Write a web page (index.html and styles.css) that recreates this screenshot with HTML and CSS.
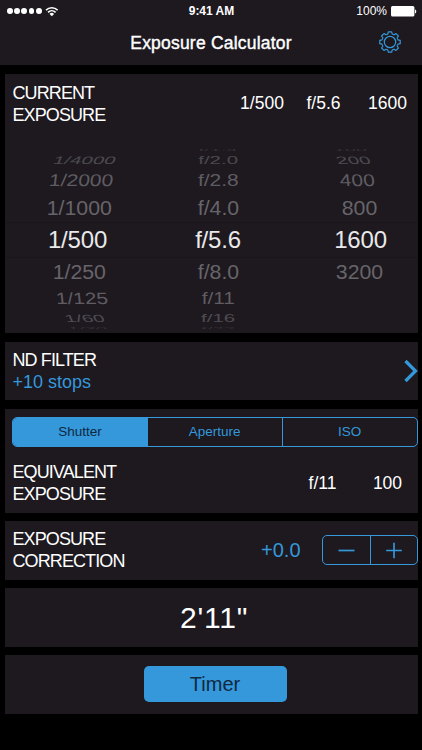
FILE: index.html
```html
<!DOCTYPE html>
<html lang="en">
<head>
    <meta charset="UTF-8">
    <meta name="viewport" content="width=device-width, initial-scale=1.0">
    <title>Exposure Calculator</title>
    <link rel="stylesheet" href="styles.css">
</head>
<body>
    <header class="header">
        <div class="status">
            <div class="signal">
                <i class="dot"></i><i class="dot"></i><i class="dot"></i><i class="dot"></i><i class="dot"></i>
                <svg class="wifi" width="14" height="11" viewBox="0 0 14 11">
                    <path d="M1 4.1a8.4 8.4 0 0 1 11.6 0M3 6.3a5.5 5.5 0 0 1 7.6 0" fill="none" stroke="#fff" stroke-width="1.6"/>
                    <path d="M6.8 10.3L4.5 7.9a3.3 3.3 0 0 1 4.6 0z" fill="#fff"/>
                </svg>
            </div>
            <div class="clock">9:41 AM</div>
            <div class="power">
                <span class="percent">100%</span>
                <svg width="26" height="11" viewBox="0 0 26 11">
                    <rect x="0" y="0" width="23.4" height="10.6" rx="1.5" fill="#fff"/>
                    <path d="M24 3.4c1.7.5 1.7 3.5 0 4z" fill="#fff"/>
                </svg>
            </div>
        </div>
        <div class="titlebar">
            <h1>Exposure Calculator</h1>
            <svg class="gear" width="24" height="24" viewBox="-12 -12 24 24">
                <defs>
                    <path id="tooth" d="M-3.14-7.58L-2.2-7.95L-1.7-10.2H1.7L2.2-7.95L3.14-7.58"/>
                </defs>
                <circle r="5.7"/>
                <use href="#tooth"/>
                <use href="#tooth" transform="rotate(45)"/>
                <use href="#tooth" transform="rotate(90)"/>
                <use href="#tooth" transform="rotate(135)"/>
                <use href="#tooth" transform="rotate(180)"/>
                <use href="#tooth" transform="rotate(225)"/>
                <use href="#tooth" transform="rotate(270)"/>
                <use href="#tooth" transform="rotate(315)"/>
            </svg>
        </div>
    </header>

    <main class="cards">
        <section class="card current">
            <div class="summary">
                <h2>CURRENT<br>EXPOSURE</h2>
                <div class="values">
                    <span class="shutter">1/500</span>
                    <span class="aperture">f/5.6</span>
                    <span class="iso">1600</span>
                </div>
            </div>
            <div class="picker">
                <div class="row up4"><span></span><span>f/1.4</span><span>100</span></div>
                <div class="row up3"><span>1/4000</span><span>f/2.0</span><span>200</span></div>
                <div class="row up2"><span>1/2000</span><span>f/2.8</span><span>400</span></div>
                <div class="row up1"><span>1/1000</span><span>f/4.0</span><span>800</span></div>
                <div class="row selected"><span>1/500</span><span>f/5.6</span><span>1600</span></div>
                <div class="row down1"><span>1/250</span><span>f/8.0</span><span>3200</span></div>
                <div class="row down2"><span>1/125</span><span>f/11</span><span></span></div>
                <div class="row down3"><span>1/60</span><span>f/16</span><span></span></div>
                <div class="row down4"><span>1/30</span><span>f/22</span><span></span></div>
            </div>
        </section>

        <section class="card filter">
            <div>
                <h2>ND FILTER</h2>
                <p class="stops">+10 stops</p>
            </div>
            <svg class="chevron" width="14" height="24" viewBox="0 0 14 24">
                <path d="M1.5 2L11.5 12L1.5 22" fill="none" stroke="#3498db" stroke-width="3.2"/>
            </svg>
        </section>

        <section class="card equivalent">
            <div class="segments">
                <div class="segment active">Shutter</div>
                <div class="segment">Aperture</div>
                <div class="segment">ISO</div>
            </div>
            <div class="summary">
                <h2>EQUIVALENT<br>EXPOSURE</h2>
                <div class="values">
                    <span class="aperture">f/11</span>
                    <span class="iso">100</span>
                </div>
            </div>
        </section>

        <section class="card correction">
            <h2>EXPOSURE<br>CORRECTION</h2>
            <div class="adjust">
                <span class="amount">+0.0</span>
                <div class="stepper">
                    <svg width="47" height="29" viewBox="0 0 47 29">
                        <path d="M15.5 14.5H31.5"/>
                    </svg>
                    <svg width="47" height="29" viewBox="0 0 47 29">
                        <path d="M15.5 14.5H31.5M23.5 6.5V22.5"/>
                    </svg>
                </div>
            </div>
        </section>

        <section class="card result">2'11"</section>

        <section class="card action">
            <button class="timer">Timer</button>
        </section>
    </main>
</body>
</html>
```
FILE: styles.css
```css
* {
    box-sizing: border-box;
    margin: 0;
    padding: 0;
}

body {
    width: 422px;
    height: 750px;
    overflow: hidden;
    background: #000;
    color: #fff;
    font-family: "Liberation Sans", Arial, sans-serif;
}

.header {
    height: 65px;
    background: #1d191f;
}

.status {
    display: grid;
    grid-template-columns: 1fr auto 1fr;
    align-items: center;
    height: 21px;
    padding: 1px 6px 0 7px;
    font-size: 12px;
}

.signal {
    display: flex;
    align-items: center;
    gap: 1.4px;
}

.dot {
    width: 5.8px;
    height: 5.8px;
    border-radius: 50%;
    background: #fff;
}

.wifi {
    margin-left: 2.5px;
}

.clock {
    font-weight: bold;
    font-size: 12px;
}

.power {
    display: flex;
    justify-content: flex-end;
    align-items: center;
    gap: 4px;
}

.power svg {
    margin-right: -1px;
}

.titlebar {
    display: grid;
    grid-template-columns: 1fr auto 1fr;
    align-items: center;
    height: 43px;
    padding-right: 20px;
    padding-left: 20px;
}

.titlebar h1 {
    grid-column: 2;
    padding-top: 2px;
    font-size: 17.5px;
    font-weight: normal;
    letter-spacing: 0.2px;
    -webkit-text-stroke: 0.4px #fff;
}

.gear {
    justify-self: end;
    margin-top: -1px;
    fill: none;
    stroke: #3498db;
    stroke-width: 1.2;
    stroke-linejoin: round;
}

.cards {
    display: flex;
    flex-direction: column;
    gap: 8.5px;
    padding: 9px 4.5px 0 4.5px;
}

.card {
    height: 58.5px;
    background: #1d191f;
}

.card h2 {
    font-size: 18px;
    font-weight: normal;
    letter-spacing: -0.9px;
    line-height: 22px;
}

.current {
    height: 259px;
}

.summary {
    display: flex;
    justify-content: space-between;
    align-items: center;
    height: 58px;
    padding-top: 1px;
    padding-left: 8px;
}

.values {
    display: flex;
    font-size: 17.5px;
    text-align: center;
}

.shutter {
    width: 60px;
    padding-left: 3px;
}

.aperture {
    width: 66px;
}

.iso {
    width: 62px;
    margin-right: -1px;
}

/* wheel picker */
.picker {
    height: 187px;
    margin-top: 14px;
    color: #67646a;
    font-size: 21.5px;
    clip-path: inset(3px 0 4px 0);
}

.row {
    display: grid;
    grid-template-columns: 145px 137px 1fr;
    align-items: center;
    justify-items: center;
    line-height: 0;
    white-space: nowrap;
}

.row span:first-child {
    margin-left: 1px;
}

.row span:last-child {
    margin-left: 17px;
}

.selected {
    height: 36px;
    border-top: 1px solid #19161b;
    border-bottom: 1px solid #19161b;
    color: #e9e8ea;
    font-size: 24px;
    letter-spacing: -0.2px;
}

.up1 {
    height: 28px;
    transform: scale(0.99, 0.95);
}

.up2 {
    height: 27px;
    color: #5f5c62;
    transform: scale(0.975, 0.79);
}

.up3 {
    height: 13px;
    color: #4c494f;
    transform: scale(0.95, 0.5);
}

.up4 {
    height: 8px;
    color: #353238;
    transform: scale(0.93, 0.2);
}

.down1 {
    height: 27px;
    transform: scale(0.99, 0.95);
}

.down2 {
    height: 28px;
    color: #5f5c62;
    transform: scale(0.97, 0.76);
}

.down3 {
    height: 11px;
    color: #4f4c52;
    transform: scale(0.95, 0.48);
}

.down4 {
    height: 9px;
    color: #353238;
    transform: scale(0.93, 0.2);
}

/* outer columns lean towards the middle of the wheel */
.up2 span:first-child {
    transform: skewX(-5deg);
}

.up3 span:first-child {
    transform: skewX(-12deg);
}

.up2 span:last-child {
    transform: skewX(5deg);
}

.up3 span:last-child {
    transform: skewX(12deg);
}

.down2 span:first-child {
    transform: skewX(5deg);
}

.down3 span:first-child {
    transform: skewX(12deg);
}

.filter {
    display: flex;
    justify-content: space-between;
    align-items: center;
    padding-top: 1px;
    padding-left: 8px;
}

.stops {
    color: #3498db;
    font-size: 18px;
    line-height: 23px;
}

.equivalent {
    height: 104px;
    padding-top: 8px;
}

.segments {
    display: flex;
    height: 30px;
    margin-left: 7.5px;
    border: 1px solid #3498db;
    border-radius: 5px;
    overflow: hidden;
}

.segment {
    flex: 1;
    color: #3498db;
    font-size: 13.5px;
    line-height: 28px;
    text-align: center;
}

.segment + .segment {
    border-left: 1px solid #3498db;
}

.active {
    background: #3498db;
    color: #10293f;
}

.equivalent .summary {
    height: 72px;
}

.equivalent .aperture {
    margin-right: 1px;
}

.correction {
    display: flex;
    justify-content: space-between;
    align-items: center;
    padding-left: 8px;
}

.adjust {
    display: flex;
    align-items: center;
    gap: 21px;
}

.amount {
    color: #3498db;
    font-size: 20px;
}

.stepper {
    display: flex;
    width: 96px;
    height: 30px;
    border: 1px solid #3498db;
    border-radius: 5px;
    fill: none;
    stroke: #3498db;
    stroke-width: 1.7;
}

.stepper svg + svg {
    border-left: 1px solid #3498db;
}

.result {
    display: flex;
    align-items: center;
    justify-content: center;
    padding-top: 2px;
    padding-left: 6px;
    font-size: 30px;
    letter-spacing: 0.8px;
}

.action {
    display: flex;
    align-items: center;
    justify-content: center;
    padding-left: 8px;
}

.timer {
    width: 143px;
    height: 36px;
    padding-top: 1px;
    border: none;
    border-radius: 5px;
    background: #3498db;
    color: #10293f;
    font-family: inherit;
    font-size: 20px;
}
```
